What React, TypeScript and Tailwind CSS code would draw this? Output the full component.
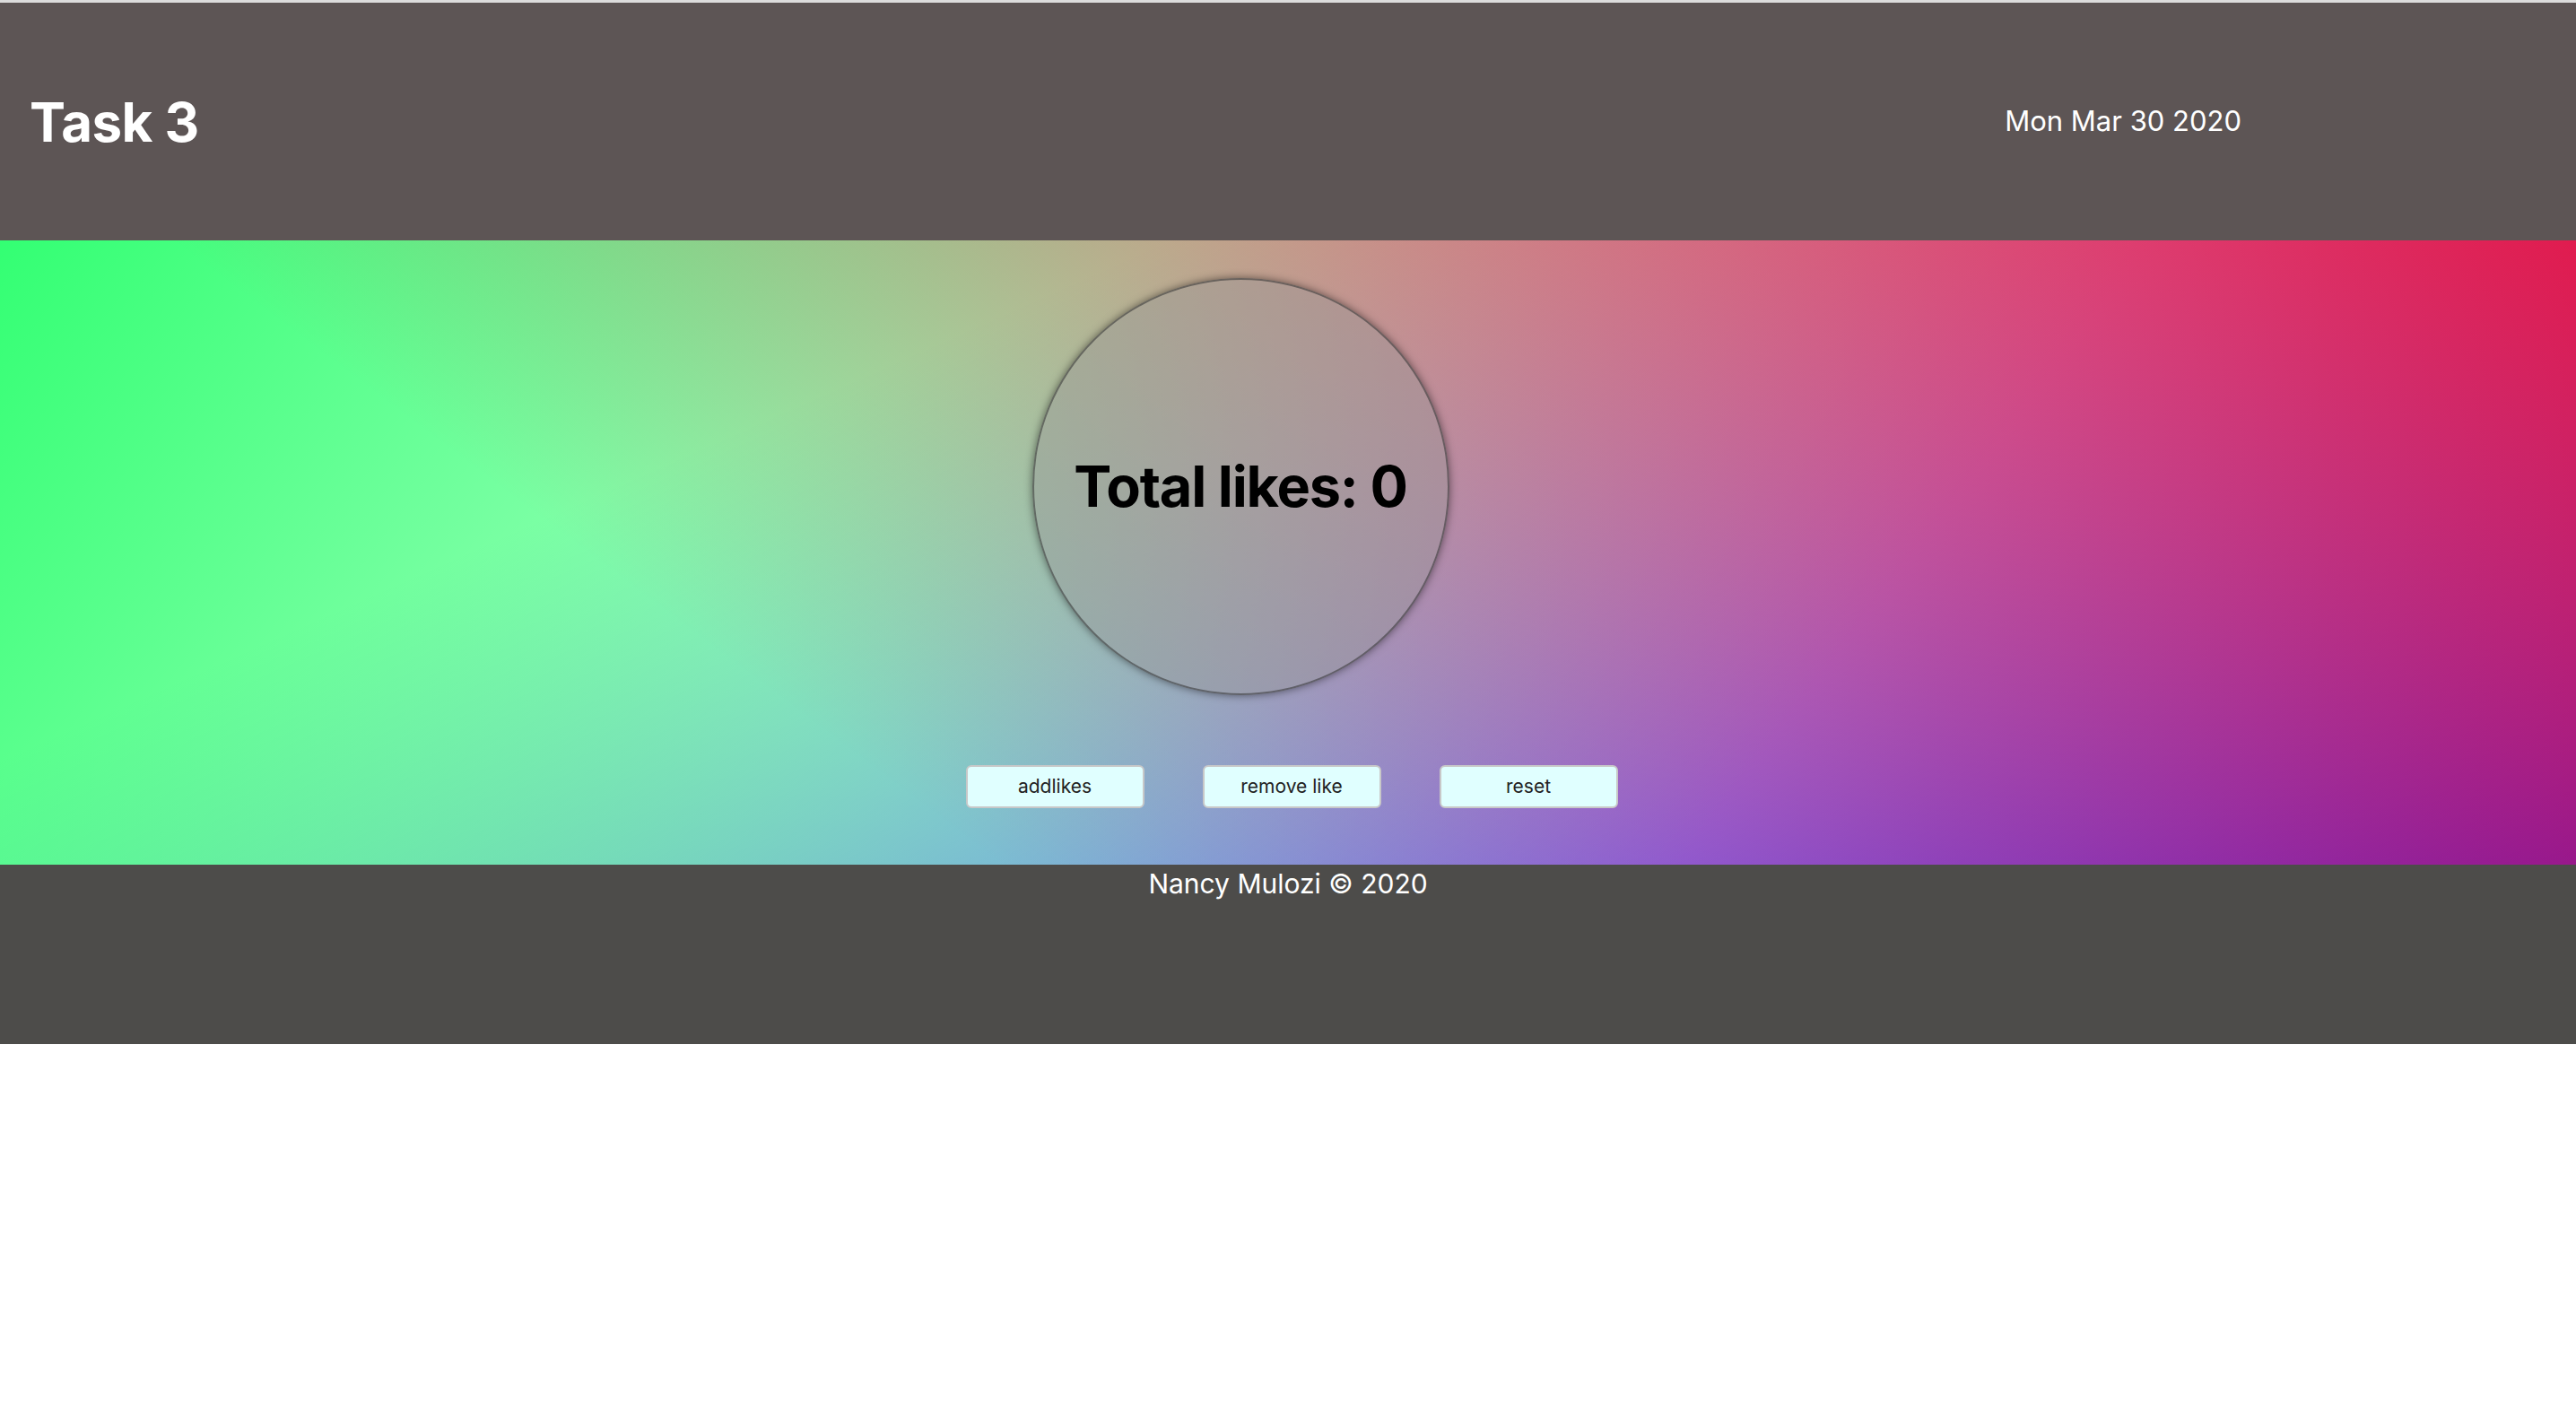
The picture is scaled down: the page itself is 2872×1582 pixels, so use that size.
const App = () => {
    const buttons = ["addlikes", "remove like", "reset"];

    return (
        <div className="w-full font-['Inter',sans-serif] border-t-[3px] border-[#dcdcdc] bg-white min-h-screen">
            <header className="h-[265px] bg-[#5d5555] flex items-center justify-between pl-[33px] pr-[373px]">
                <h1 className="text-[60px] font-bold text-white tracking-[-0.5px]">Task 3</h1>
                <span className="text-[31px] text-white">Mon Mar 30 2020</span>
            </header>

            <main className="h-[696px] bg-white bg-[linear-gradient(217deg,rgba(240,0,40,0.82),rgba(240,0,40,0)_70.71%),linear-gradient(127deg,rgba(0,255,80,0.8),rgba(0,255,80,0)_70.71%),linear-gradient(336deg,rgba(0,0,255,0.8),rgba(0,0,255,0)_70.71%)] flex flex-col items-center pt-[42px]">
                <div className="w-[465px] h-[465px] mr-[106px] rounded-full bg-[rgba(150,150,150,0.4)] border-2 border-[rgba(50,50,50,0.55)] shadow-[0_0_10px_rgba(0,0,0,0.5)] flex items-center justify-center">
                    <h2 className="text-[63px] font-bold text-black tracking-[-1.2px]">Total likes: 0</h2>
                </div>
                <div className="flex gap-[65px] mt-[78px] ml-[8px]">
                    {buttons.map((label) => (
                        <button
                            key={label}
                            className="w-[199px] h-[48px] bg-[#e0ffff] border-2 border-[#c8c8c8] rounded-md text-[21px] text-[#222]"
                        >
                            {label}
                        </button>
                    ))}
                </div>
            </main>

            <footer className="h-[200px] bg-[#4d4c4a] flex justify-center">
                <p className="text-[30px] text-white leading-[42px]">Nancy Mulozi © 2020</p>
            </footer>
        </div>
    );
};

export default App;
